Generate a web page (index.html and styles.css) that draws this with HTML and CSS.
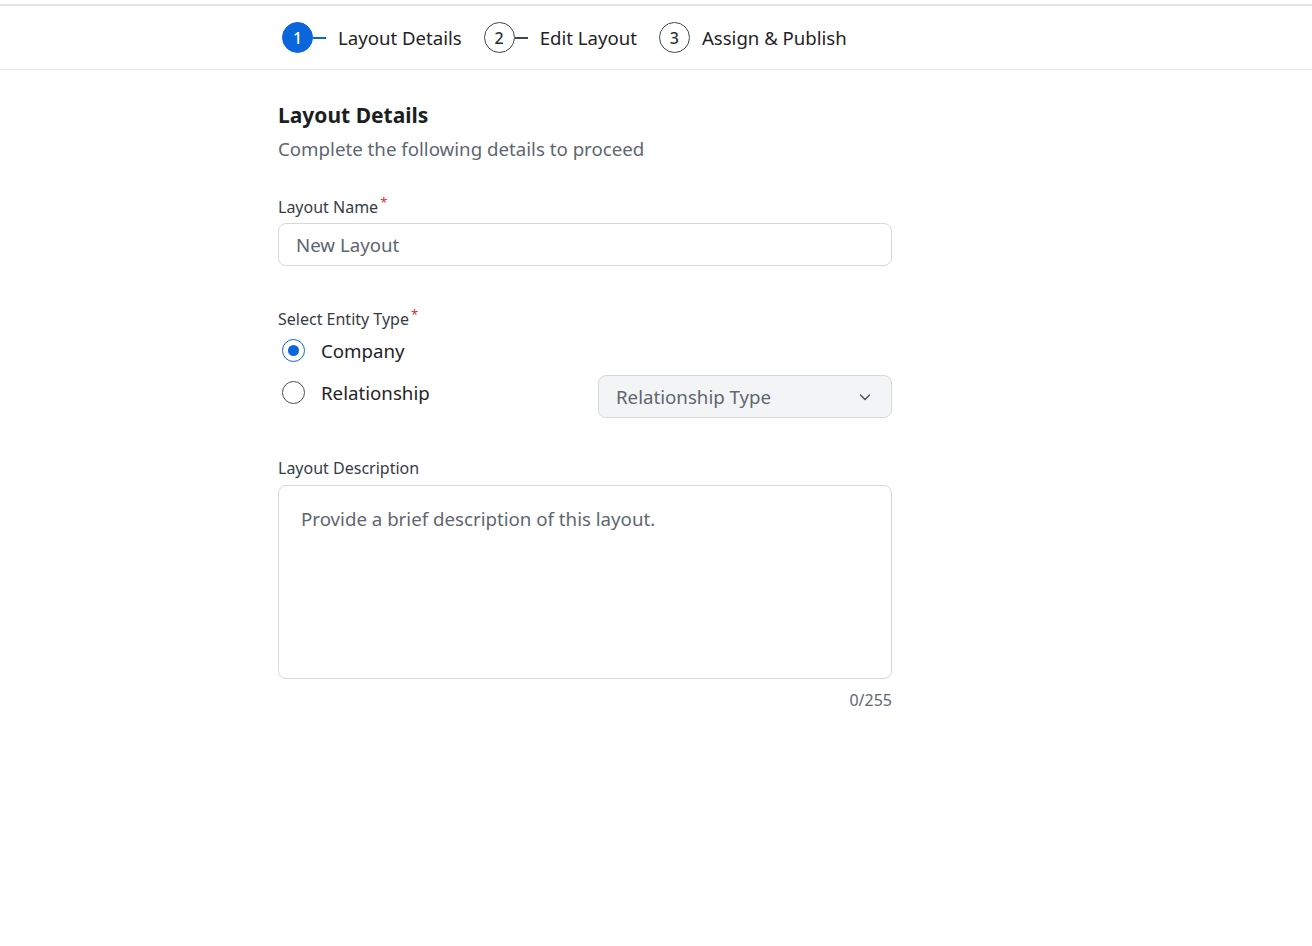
FILE: index.html
```html
<!DOCTYPE html>
<html lang="en">
<head>
    <meta charset="UTF-8">
    <meta name="viewport" content="width=device-width, initial-scale=1.0">
    <title>Layout Details</title>
    <link rel="stylesheet" href="styles.css">
</head>
<body>
    <div class="top-rule"></div>
    <header class="stepper-bar">
        <div class="stepper">
            <div class="step active">
                <span class="step-num">1</span>
                <span class="step-line"></span>
                <span class="step-label">Layout Details</span>
            </div>
            <div class="step">
                <span class="step-num">2</span>
                <span class="step-line"></span>
                <span class="step-label">Edit Layout</span>
            </div>
            <div class="step">
                <span class="step-num">3</span>
                <span class="step-label">Assign &amp; Publish</span>
            </div>
        </div>
    </header>

    <main class="form-wrap">
        <h1>Layout Details</h1>
        <p class="subtitle">Complete the following details to proceed</p>

        <div class="field">
            <label class="field-label">Layout Name<span class="req">*</span></label>
            <input type="text" class="text-input" placeholder="New Layout">
        </div>

        <div class="field entity">
            <label class="field-label">Select Entity Type<span class="req">*</span></label>
            <div class="radio-row first">
                <label class="radio"><span class="radio-dot checked"></span>Company</label>
            </div>
            <div class="radio-row split">
                <label class="radio"><span class="radio-dot"></span>Relationship</label>
                <div class="select">
                    <span>Relationship Type</span>
                    <svg width="14" height="14" viewBox="0 0 14 14"><path d="M2.5 5 L7 9.5 L11.5 5" fill="none" stroke="#4b5563" stroke-width="1.5" stroke-linecap="round" stroke-linejoin="round"/></svg>
                </div>
            </div>
        </div>

        <div class="field desc">
            <label class="field-label">Layout Description</label>
            <textarea class="text-area" placeholder="Provide a brief description of this layout."></textarea>
            <div class="counter">0/255</div>
        </div>
    </main>
</body>
</html>
```

FILE: styles.css
```css
body {
    margin: 0;
    padding: 0;
    font-family: "Noto Sans", "Open Sans", sans-serif;
    color: #1f2328;
    background-color: #fff;
}

.top-rule {
    height: 4px;
}
.stepper-bar {
    border-top: 2px solid #e3e3e3;
    border-bottom: 1px solid #e6e6e6;
    height: 63px;
}
.stepper {
    width: 614px;
    margin-left: 278px;
    padding-left: 4px;
    box-sizing: border-box;
    display: flex;
    align-items: center;
    height: 63px;
    gap: 22px;
}
.step {
    display: flex;
    align-items: center;
}
.step-num {
    width: 29px;
    height: 29px;
    border: 1px solid #3f4650;
    border-radius: 50%;
    display: flex;
    align-items: center;
    justify-content: center;
    font-size: 16px;
    font-weight: 500;
    color: #2b3036;
}
.step.active .step-num {
    background-color: #0b66dc;
    border-color: #0b66dc;
    color: #fff;
}
.step-line {
    width: 13px;
    height: 2px;
    background-color: #3f4650;
}
.step.active .step-line {
    background-color: #0b66dc;
}
.step-label {
    margin-left: 12px;
    font-size: 18.6px;
    color: #1f2328;
}

.form-wrap {
    width: 614px;
    margin-left: 278px;
    padding-top: 30px;
}
h1 {
    margin: 0;
    font-size: 21px;
    font-weight: 700;
    line-height: 30px;
    color: #1b1f23;
}
.subtitle {
    margin: 5px 0 0;
    font-size: 18.7px;
    line-height: 28px;
    color: #5f6670;
}

.field {
    margin-top: 28px;
}
.field-label {
    display: block;
    font-size: 16px;
    line-height: 22px;
    color: #363c44;
}
.req {
    color: #d6302f;
    font-size: 13px;
    vertical-align: 6px;
    margin-left: 2px;
}
.text-input {
    display: block;
    width: 100%;
    box-sizing: border-box;
    height: 43px;
    margin-top: 5px;
    padding: 0 17px;
    border: 1px solid #d6d8db;
    border-radius: 8px;
    font-family: inherit;
    font-size: 18.7px;
    color: #1f2328;
}
.text-input::placeholder,
.text-area::placeholder {
    color: #5f6670;
}

.entity {
    margin-top: 37px;
}
.radio-row {
    display: flex;
    align-items: center;
    height: 43px;
}
.radio-row.first {
    height: 41px;
}
.radio-row.split {
    justify-content: space-between;
}
.radio {
    display: flex;
    align-items: center;
    font-size: 18.7px;
    color: #1f2328;
    padding-left: 4px;
}
.radio-dot {
    width: 23px;
    height: 23px;
    border: 1px solid #4a5058;
    border-radius: 50%;
    box-sizing: border-box;
    margin-right: 16px;
    display: inline-flex;
    align-items: center;
    justify-content: center;
}
.radio-dot.checked {
    border-color: #0b66dc;
}
.radio-dot.checked::after {
    content: "";
    width: 11px;
    height: 11px;
    border-radius: 50%;
    background-color: #0b66dc;
}
.select {
    width: 294px;
    height: 43px;
    margin-top: 8px;
    box-sizing: border-box;
    border: 1px solid #d6d8db;
    border-radius: 8px;
    background-color: #f3f4f6;
    display: flex;
    align-items: center;
    justify-content: space-between;
    padding: 0 19px 0 17px;
    font-size: 18.7px;
    color: #5f6670;
}

.desc {
    margin-top: 43px;
}
.text-area {
    display: block;
    width: 100%;
    box-sizing: border-box;
    height: 194px;
    margin-top: 6px;
    padding: 20px 22px;
    border: 1px solid #d6d8db;
    border-radius: 8px;
    font-family: inherit;
    font-size: 18.7px;
    line-height: 26px;
    resize: none;
}
.counter {
    text-align: right;
    font-size: 16px;
    color: #5f6670;
    margin-top: 10px;
}
```
